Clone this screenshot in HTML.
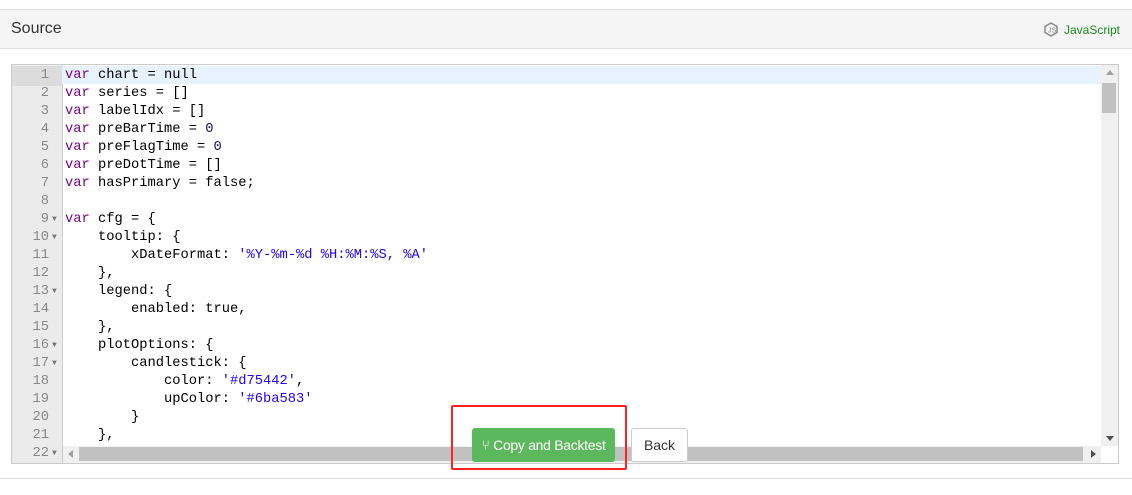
<!DOCTYPE html>
<html><head><style>
body{margin:0;width:1132px;height:495px;background:#fff;font-family:"Liberation Sans",sans-serif;position:relative;overflow:hidden}
.hdr{position:absolute;left:0;top:9px;width:1132px;height:38px;background:#f5f5f5;border-top:1px solid #ddd;border-bottom:1px solid #ddd}
.hdr .t{position:absolute;left:11px;top:10px;font-size:16px;color:#333}
.hdr .js{position:absolute;right:12px;top:12px;font-size:12px;color:#1a8a1a}
.ed{position:absolute;left:11px;top:64px;width:1106px;height:398px;border:1px solid #ccc;background:#fff;overflow:hidden}
.gut{position:absolute;left:0;top:0;width:50px;height:398px;background:#ebebeb;border-right:1px solid #ccc}
.code{position:absolute;left:0;top:1px;width:1089px;font-family:"Liberation Mono",monospace;font-size:13.75px;line-height:18px}
.ln{height:18px;position:relative;line-height:20px}
.ln .n{position:absolute;left:0;width:37px;text-align:right;color:#888}
.ln .f{position:absolute;left:40px;font-size:8px;color:#777}
.ln .c{position:absolute;left:53px;white-space:pre;color:#000}
.ln.a{background:#e8f2fe}
.k{color:#708}.s{color:#20f}.num{color:#116}
.vs{position:absolute;right:0;top:0;width:17px;height:381px;background:#f0f0f0}
.hs{position:absolute;left:51px;bottom:0;width:1038px;height:17px;background:#f0f0f0}
</style></head><body>
<div class="hdr"><span class="t">Source</span><span class="js"><svg width="14" height="15" viewBox="0 0 14 15" style="vertical-align:-3px;margin-right:6px"><path d="M7 1L13 4.5V10.5L7 14L1 10.5V4.5Z" fill="none" stroke="#888" stroke-width="1.5"/><text x="4" y="10.5" font-size="7" fill="#888" font-family="Liberation Sans">JS</text></svg>JavaScript</span></div>
<div class="ed">
<div class="gut"></div>
<div class="code">
<div class="ln a"><span class="n" style="width:37px;padding-right:13px;background:#dcdcdc">1</span><span class="c"><span class="k">var</span> chart = null</span></div>
<div class="ln"><span class="n">2</span><span class="c"><span class="k">var</span> series = []</span></div>
<div class="ln"><span class="n">3</span><span class="c"><span class="k">var</span> labelIdx = []</span></div>
<div class="ln"><span class="n">4</span><span class="c"><span class="k">var</span> preBarTime = <span class="num">0</span></span></div>
<div class="ln"><span class="n">5</span><span class="c"><span class="k">var</span> preFlagTime = <span class="num">0</span></span></div>
<div class="ln"><span class="n">6</span><span class="c"><span class="k">var</span> preDotTime = []</span></div>
<div class="ln"><span class="n">7</span><span class="c"><span class="k">var</span> hasPrimary = false;</span></div>
<div class="ln"><span class="n">8</span><span class="c"></span></div>
<div class="ln"><span class="n">9</span><span class="f">▼</span><span class="c"><span class="k">var</span> cfg = {</span></div>
<div class="ln"><span class="n">10</span><span class="f">▼</span><span class="c">    tooltip: {</span></div>
<div class="ln"><span class="n">11</span><span class="c">        xDateFormat: <span class="s">'%Y-%m-%d %H:%M:%S, %A'</span></span></div>
<div class="ln"><span class="n">12</span><span class="c">    },</span></div>
<div class="ln"><span class="n">13</span><span class="f">▼</span><span class="c">    legend: {</span></div>
<div class="ln"><span class="n">14</span><span class="c">        enabled: true,</span></div>
<div class="ln"><span class="n">15</span><span class="c">    },</span></div>
<div class="ln"><span class="n">16</span><span class="f">▼</span><span class="c">    plotOptions: {</span></div>
<div class="ln"><span class="n">17</span><span class="f">▼</span><span class="c">        candlestick: {</span></div>
<div class="ln"><span class="n">18</span><span class="c">            color: <span class="s">'#d75442'</span>,</span></div>
<div class="ln"><span class="n">19</span><span class="c">            upColor: <span class="s">'#6ba583'</span></span></div>
<div class="ln"><span class="n">20</span><span class="c">        }</span></div>
<div class="ln"><span class="n">21</span><span class="c">    },</span></div>
<div class="ln"><span class="n">22</span><span class="f">▼</span></div>
</div>
<div class="vs"><div style="position:absolute;left:5px;top:5px;border:4px solid transparent;border-bottom:5px solid #a0a0a0;border-top:0"></div><div style="position:absolute;left:1px;top:18px;width:14px;height:30px;background:#c1c1c1"></div><div style="position:absolute;left:5px;bottom:5px;border:4px solid transparent;border-top:5px solid #505050;border-bottom:0"></div></div>
<div class="hs"><div style="position:absolute;left:5px;top:4px;border:4px solid transparent;border-right:5px solid #a0a0a0;border-left:0"></div><div style="position:absolute;left:16px;top:1px;width:1004px;height:14px;background:#c1c1c1"></div><div style="position:absolute;right:5px;top:4px;border:4px solid transparent;border-left:5px solid #505050;border-right:0"></div></div>
</div>
<div style="position:absolute;left:0;top:478px;width:1132px;border-top:1px solid #ddd"></div>
<div style="position:absolute;left:472px;top:428px;width:143px;height:34px;background:#5cb85c;border-radius:3px;color:#fff;font-size:14px;line-height:34px;text-align:center;letter-spacing:-0.3px">⑂ Copy and Backtest</div>
<div style="position:absolute;left:631px;top:428px;width:55px;height:32px;background:#fff;border:1px solid #ccc;border-radius:3px;color:#333;font-size:14px;line-height:32px;text-align:center">Back</div>
<div style="position:absolute;left:451px;top:405px;width:172px;height:61px;border:2px solid #f22;border-radius:2px"></div>
</body></html>
